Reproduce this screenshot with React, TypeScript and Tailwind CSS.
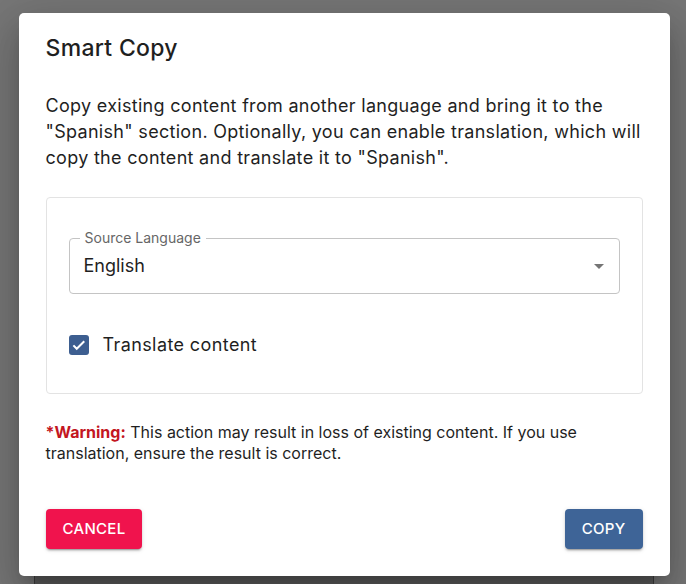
import { useState } from "react";

function ArrowDropDown() {
  return (
    <svg viewBox="0 0 24 24" className="h-6 w-6 fill-[#757575]" aria-hidden="true">
      <path d="M7 10l5 5 5-5z" />
    </svg>
  );
}

function CheckIcon() {
  return (
    <svg viewBox="0 0 24 24" className="h-[18px] w-[18px]" aria-hidden="true">
      <path d="M4.5 12.5l4.5 4.5 10-10" fill="none" stroke="#fff" strokeWidth="2.8" />
    </svg>
  );
}

export default function App() {
  const [translate, setTranslate] = useState(true);

  const font = "font-['Inter','Noto_Sans',sans-serif]";

  return (
    <div className={`relative h-[584px] w-full overflow-hidden bg-[#767676] ${font}`}>
      {/* page content behind the backdrop */}
      <div className="absolute left-[34px] right-[32px] top-[560px] h-[40px] border-x border-[#3e3e3e] bg-[#5c5c5c]" />

      <div className="relative flex justify-center pl-[2px] pt-[13px]">
        <div className="flex w-[651px] flex-col rounded-[5px] bg-white px-[27px] pb-[27px] pt-[16px] text-[#1f1f1f] shadow-[0_11px_15px_-7px_rgba(0,0,0,0.2),0_24px_38px_3px_rgba(0,0,0,0.14),0_9px_46px_8px_rgba(0,0,0,0.12)]">
          <h2 className="text-[23px] font-medium leading-[38px] tracking-[0.3px]">Smart Copy</h2>

          <p className="mt-[26px] whitespace-nowrap text-[18px] leading-[26px] tracking-[0.3px]">
            Copy existing content from another language and bring it to the
            <br />
            "Spanish" section. Optionally, you can enable translation, which will
            <br />
            copy the content and translate it to "Spanish".
          </p>

          <div className="mt-[26px] rounded-[4px] border border-[#e3e3e3] px-[22px] pb-[36px] pt-[40px]">
            <div className="relative flex h-[56px] items-center rounded-[4px] border border-[#c4c4c4] pl-[14px] pr-[8px]">
              <span className="absolute -top-[9px] left-[10px] bg-white px-[5px] text-[14px] leading-[16px] text-[#666]">
                Source Language
              </span>
              <span className="flex-1 text-[18px] leading-[24px]">English</span>
              <ArrowDropDown />
            </div>

            <label className="mt-[39px] flex cursor-pointer items-center gap-[14px]">
              <button
                type="button"
                onClick={() => setTranslate((t) => !t)}
                className={`flex h-[20px] w-[20px] items-center justify-center rounded-[3px] ${
                  translate ? "bg-[#3d5e90]" : "border-2 border-[#757575]"
                }`}
              >
                {translate && <CheckIcon />}
              </button>
              <span className="text-[18px] leading-[24px] tracking-[0.4px]">Translate content</span>
            </label>
          </div>

          <p className="mt-[28px] whitespace-nowrap text-[16px] leading-[21px]">
            <span className="font-bold text-[#c3161f]">*Warning:</span> This action may result in loss of existing content. If you use
            <br />
            translation, ensure the result is correct.
          </p>

          <div className="mt-[45px] flex items-center justify-between">
            <button
              type="button"
              className="h-[40px] rounded-[4px] bg-[#f0134d] px-[17px] text-[15px] font-medium uppercase tracking-[0.3px] text-white shadow-[0_3px_1px_-2px_rgba(0,0,0,0.2),0_2px_2px_0_rgba(0,0,0,0.14),0_1px_5px_0_rgba(0,0,0,0.12)]"
            >
              Cancel
            </button>
            <button
              type="button"
              className="h-[40px] rounded-[4px] bg-[#3e6497] px-[17px] text-[15px] font-medium uppercase tracking-[0.3px] text-white shadow-[0_3px_1px_-2px_rgba(0,0,0,0.2),0_2px_2px_0_rgba(0,0,0,0.14),0_1px_5px_0_rgba(0,0,0,0.12)]"
            >
              Copy
            </button>
          </div>
        </div>
      </div>
    </div>
  );
}
